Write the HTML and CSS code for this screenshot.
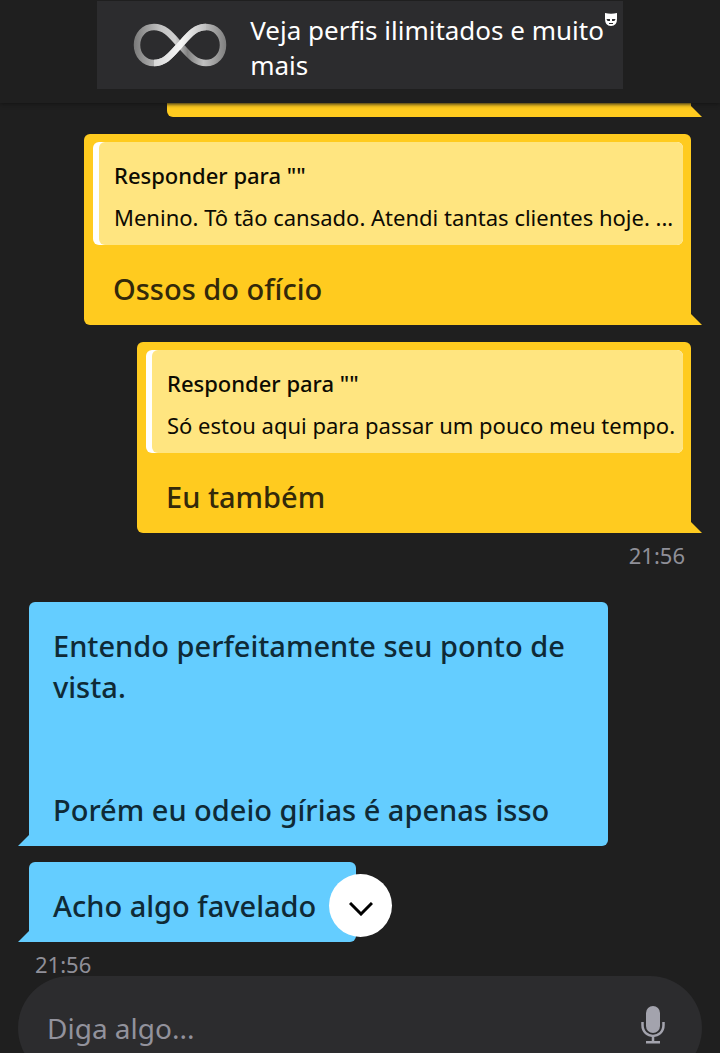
FILE: index.html
```html
<!DOCTYPE html>
<html lang="pt-BR">
<head>
    <meta charset="utf-8">
    <meta name="viewport" content="width=device-width, initial-scale=1">
    <title>Chat</title>
    <link rel="stylesheet" href="styles.css">
</head>
<body>
    <header class="header">
        <a class="promo" href="#">
            <svg class="promo-logo" viewBox="0 0 94 44" aria-hidden="true">
                <defs>
                    <linearGradient id="silver" gradientUnits="userSpaceOnUse" x1="0" y1="0" x2="94" y2="0">
                        <stop offset="0" stop-color="#777"/>
                        <stop offset=".3" stop-color="#c4c4c4"/>
                        <stop offset=".45" stop-color="#d0d0d0"/>
                        <stop offset=".58" stop-color="#808080"/>
                        <stop offset=".75" stop-color="#c0c0c0"/>
                        <stop offset="1" stop-color="#7c7c7c"/>
                    </linearGradient>
                    <linearGradient id="shine" gradientUnits="userSpaceOnUse" x1="18" y1="0" x2="78" y2="0">
                        <stop offset="0" stop-color="#d4d4d4"/>
                        <stop offset=".5" stop-color="#f6f6f6"/>
                        <stop offset="1" stop-color="#b4b4b4"/>
                    </linearGradient>
                </defs>
                <path fill="none" stroke="url(#silver)" stroke-width="6.500" d="M47 22C38 12 32 4 21 4C11 4 4 12 4 22S11 40 21 40C32 40 38 32 47 22C56 12 62 4 73 4C83 4 90 12 90 22S83 40 73 40C62 40 56 32 47 22Z"/>
                <path fill="none" stroke="url(#shine)" stroke-width="6.500" d="M21 40C32 40 38 32 47 22C56 12 62 4 73 4"/>
            </svg>
            <span class="promo-text">Veja perfis ilimitados e muito mais</span>
            <svg class="promo-mask" viewBox="0 0 12 13" aria-hidden="true">
                <path fill="#fff" d="M0 0Q6 1.500 12 0V6Q12 13 6 13T0 6Z"/>
                <path fill="#2c2c2e" d="M1.500 6H5V8H3Q2 8 1.500 6ZM7 6H10.500Q10 8 9 8H7ZM4 10H8V11H4Z"/>
            </svg>
        </a>
    </header>

    <main class="chat">
        <div class="bubble sent clipped"></div>

        <div class="bubble sent">
            <div class="quote">
                <div class="quote-body">
                    <div class="quote-title">Responder para ""</div>
                    <div class="quote-text">Menino. Tô tão cansado. Atendi tantas clientes hoje. ...</div>
                </div>
            </div>
            <p class="reply">Ossos do ofício</p>
        </div>

        <div class="bubble sent short">
            <div class="quote">
                <div class="quote-body">
                    <div class="quote-title">Responder para ""</div>
                    <div class="quote-text">Só estou aqui para passar um pouco meu tempo.</div>
                </div>
            </div>
            <p class="reply">Eu também</p>
        </div>
        <time class="time time-sent">21:56</time>

        <div class="bubble received first">
            <p>Entendo perfeitamente seu ponto de vista.</p>
            <p class="spaced">Porém eu odeio gírias é apenas isso</p>
        </div>

        <div class="bubble received">
            <p>Acho algo favelado</p>
            <button class="scroll-down" type="button" aria-label="Ir para o fim">
                <svg viewBox="0 0 24 14" aria-hidden="true">
                    <path fill="none" stroke="#000" stroke-width="3" d="M1 1L12 12L23 1"/>
                </svg>
            </button>
        </div>
        <time class="time">21:56</time>
    </main>

    <footer class="footer">
        <form class="composer">
            <input class="composer-input" type="text" placeholder="Diga algo..." aria-label="Mensagem">
            <button class="mic" type="button" aria-label="Gravar áudio">
                <svg viewBox="0 0 24 38" aria-hidden="true">
                    <rect x="5" y="0" width="14" height="27" rx="7" fill="#a3a3ad"/>
                    <path fill="none" stroke="#a3a3ad" stroke-width="2.500" d="M1.500 16V19C1.500 33.500 22.500 33.500 22.500 19V16M12 30V36M5 36.200H19"/>
                </svg>
            </button>
        </form>
    </footer>
</body>
</html>
```

FILE: styles.css
```css
* { box-sizing: border-box; }

body {
    display: flex;
    flex-direction: column;
    height: 100vh;
    margin: 0;
    overflow: hidden;
    background: #1f1f1f;
    color: #fff;
    font-family: "Noto Sans", "Open Sans", sans-serif;
}

p { margin: 0; }

.header {
    flex: none;
    display: flex;
    justify-content: center;
    height: 103px;
    padding: 1px 0 14px;
    box-shadow: 0 1px 4px #141414;
    z-index: 1;
}

.promo {
    display: flex;
    align-items: center;
    position: relative;
    width: 73%;
    padding: 0 12px 0 36px;
    background: #2c2c2e;
    color: #fff;
    font-size: 26px;
    line-height: 35px;
    text-decoration: none;
}

.promo-logo { flex: none; width: 94px; height: 44px; margin-right: 23px; }
.promo-text { flex: 1; padding-top: 6px; }
.promo-mask { position: absolute; top: 12px; right: 6px; width: 12px; height: 13px; }

/* messages */
.chat {
    flex: 1;
    display: flex;
    flex-direction: column;
    align-items: flex-start;
    min-height: 0;
    padding: 0 29px;
}

.bubble {
    flex: none;
    position: relative;
    margin-bottom: 17px;
    border-radius: 6px;
    color: #0f2a36;
    font-size: 29px;
    font-weight: 500;
    line-height: 41px;
}

/* little tail in the lower corner */
.bubble::after {
    content: "";
    position: absolute;
    bottom: 0;
    border-top: 11px solid transparent;
}

.sent {
    align-self: flex-end;
    width: 607px;
    padding: 8px 8px 16px 9px;
    border-bottom-right-radius: 0;
    background: #ffcb1f;
    color: #33290a;
}

.sent::after { left: 100%; border-left: 11px solid #ffcb1f; }

.short { width: 554px; margin-bottom: 0; }

.clipped {
    width: 524px;
    height: 14px;
    padding: 0;
    border-top-left-radius: 0;
    border-top-right-radius: 0;
}

.quote {
    padding-left: 6px;
    border-radius: 6px;
    background: #fff;
    color: #0d0b02;
    font-size: 22px;
    line-height: 42px;
    white-space: nowrap;
}

.quote-body {
    padding: 12px 8px 7px 15px;
    border-radius: 6px;
    background: #ffe580;
}

.quote-title { font-weight: 500; }
.quote-text { font-weight: 400; }
.reply { padding: 23px 20px 0; }

.received {
    margin-bottom: 0;
    padding: 23px 24px 16px;
    border-bottom-left-radius: 0;
    background: #64cdff;
    min-width: 327px;
}

.received::after { right: 100%; border-right: 11px solid #64cdff; }

.first { width: 579px; margin: 35px 0 16px; }
.spaced { margin-top: 82px; }

.time {
    margin-top: 10px;
    padding: 0 6px;
    color: #8f8f98;
    font-size: 22px;
    line-height: 24px;
}

.time-sent { align-self: flex-end; }

.scroll-down {
    display: flex;
    align-items: center;
    justify-content: center;
    position: absolute;
    top: 12px;
    left: 300px;
    width: 63px;
    height: 63px;
    padding: 6px 0 0;
    border: none;
    border-radius: 50%;
    background: #fff;
    z-index: 1;
}

.scroll-down svg { width: 24px; height: 14px; }

/* message box, runs past the lower edge of the window */
.footer { flex: none; height: 77px; padding: 0 18px; }

.composer {
    display: flex;
    align-items: center;
    height: 104px;
    padding: 0 37px 0 29px;
    border-radius: 52px;
    background: #2c2c2e;
}

.composer-input {
    flex: 1;
    min-width: 0;
    padding: 0;
    border: none;
    outline: none;
    background: none;
    color: #fff;
    font-family: inherit;
    font-size: 28px;
}

.composer-input::placeholder { color: #92929c; opacity: 1; }

.mic { padding: 0 0 6px; border: none; background: none; }
.mic svg { display: block; width: 24px; height: 38px; }
```
